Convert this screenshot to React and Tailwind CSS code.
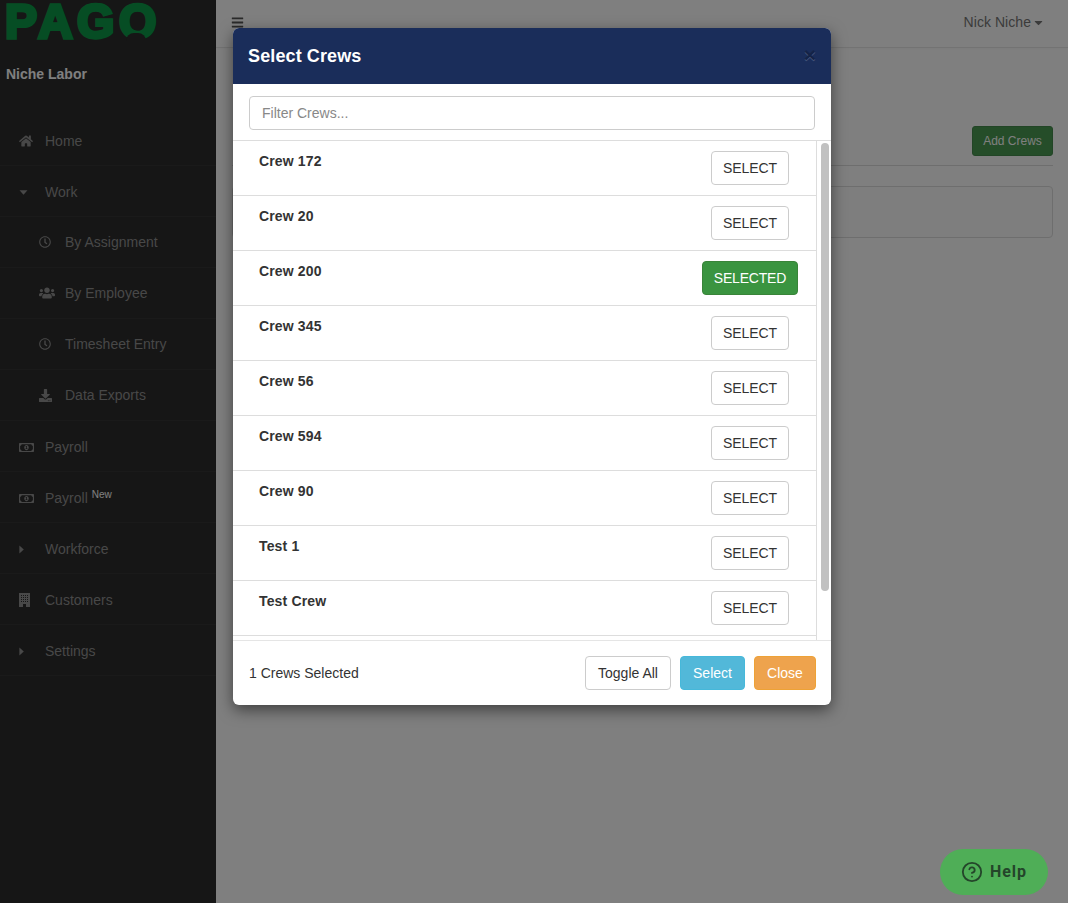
import React from "react";
import { FaHome, FaRegClock, FaUsers, FaDownload, FaRegMoneyBillAlt, FaBars, FaCaretDown } from "react-icons/fa";
import { CircleHelp } from "lucide-react";

const crews = ["Crew 172", "Crew 20", "Crew 200", "Crew 345", "Crew 56", "Crew 594", "Crew 90", "Test 1", "Test Crew"];

const CaretDown = () => (
  <svg width="9" height="5" viewBox="0 0 9 5" className="fill-[#909090]">
    <path d="M0.5 0.2h8L4.5 4.8z" />
  </svg>
);

const CaretRight = () => (
  <svg width="5" height="9" viewBox="0 0 5 9" className="fill-[#909090]">
    <path d="M0.4 0.5v8L4.8 4.5z" />
  </svg>
);

const Building = () => (
  <svg width="11" height="14" viewBox="0 0 11 14" className="fill-[#909090]">
    <path
      fillRule="evenodd"
      d="M0 0h11v14H0zM2 2v1h1V2zM4 2v1h1V2zM6 2v1h1V2zM8 2v1h1V2zM2 4v1h1V4zM4 4v1h1V4zM6 4v1h1V4zM8 4v1h1V4zM2 6v1h1V6zM4 6v1h1V6zM6 6v1h1V6zM8 6v1h1V6zM2 8v1h1V8zM4 8v1h1V8zM6 8v1h1V8zM8 8v1h1V8zM4 11v3h3v-3z"
    />
  </svg>
);

const menu = [
  { label: "Home", icon: <FaHome className="text-[14px] text-[#909090]" /> },
  { label: "Work", icon: <CaretDown /> },
  { label: "By Assignment", icon: <FaRegClock className="text-[12px] text-[#909090]" />, sub: true },
  { label: "By Employee", icon: <FaUsers className="text-[16px] text-[#909090]" />, sub: true },
  { label: "Timesheet Entry", icon: <FaRegClock className="text-[12px] text-[#909090]" />, sub: true },
  { label: "Data Exports", icon: <FaDownload className="text-[13px] text-[#909090]" />, sub: true },
  { label: "Payroll", icon: <FaRegMoneyBillAlt className="text-[15px] text-[#909090]" /> },
  { label: "Payroll", icon: <FaRegMoneyBillAlt className="text-[15px] text-[#909090]" />, badge: "New" },
  { label: "Workforce", icon: <CaretRight /> },
  { label: "Customers", icon: <Building /> },
  { label: "Settings", icon: <CaretRight /> },
];

const MenuItem = ({ item }) => (
  <div className={`flex h-[51px] items-center border-b border-[#343434] text-[14px] text-[#909090] ${item.sub ? "pl-[39px]" : "pl-[19px] pt-[2px]"}`}>
    <span className="flex w-[26px] shrink-0 items-center">{item.icon}</span>
    <span>{item.label}</span>
    {item.badge && <sup className="relative top-[-3px] ml-1 text-[10px] text-white">{item.badge}</sup>}
  </div>
);

const Sidebar = () => (
  <aside className="h-full w-[216px] shrink-0 bg-[#2c2c2c]">
    <div className="relative h-[48px]">
      <span className="absolute top-0 left-[5px] text-[48px] leading-[44px] font-bold tracking-[4.5px] text-[#0c9a48] [-webkit-text-stroke:3.5px_#0c9a48]">
        PAGO
      </span>
      <span className="absolute top-[33px] left-[126px] h-[10px] w-[20px] rounded-t-[8px] bg-[#2c2c2c]" />
    </div>
    <div className="h-[67px] pt-[17px] pl-[6px] text-[14px] leading-[18px] font-bold text-white">Niche Labor</div>
    {menu.map((item, i) => (
      <MenuItem key={i} item={item} />
    ))}
  </aside>
);

const CrewRow = ({ name }) => {
  const selected = name === "Crew 200";
  return (
    <div className="flex h-[55px] justify-between border-b border-[#dddddd] pt-[10px] pl-[26px]">
      <span className="pt-[1px] text-[14px] leading-[18px] font-bold tracking-[0.15px] text-[#333333]">{name}</span>
      <div className="mr-[18px] flex w-[96px] justify-center">
        {selected ? (
          <button className="h-[34px] w-[96px] rounded-[4px] border border-[#398439] bg-[#3a9440] text-[14px] tracking-[-0.2px] text-white">SELECTED</button>
        ) : (
          <button className="h-[34px] w-[78px] rounded-[4px] border border-[#cccccc] bg-white text-[14px] tracking-[-0.1px] text-[#333333]">SELECT</button>
        )}
      </div>
    </div>
  );
};

const CrewModal = () => (
  <div className="absolute top-[28px] left-[233px] w-[598px] overflow-hidden rounded-[6px] bg-white shadow-[0_5px_15px_rgba(0,0,0,0.5)]">
    <div className="flex h-[56px] items-center justify-between bg-[#1a2d5a] pr-[15px] pl-[15px] text-white">
      <h4 className="text-[18px] font-bold tracking-[0.12px]">Select Crews</h4>
      <span className="-mt-[3px] text-[21px] leading-none font-bold text-black opacity-20 [text-shadow:0_1px_0_#fff]">×</span>
    </div>
    <div className="h-[57px] border-b border-[#dddddd] px-[16px] pt-[12px]">
      <input
        placeholder="Filter Crews..."
        className="h-[34px] w-full rounded-[4px] border border-[#cccccc] px-[12px] text-[14px] text-[#555555] placeholder:text-[#888888]"
      />
    </div>
    <div className="relative h-[499px] overflow-hidden">
      <div className="h-full w-[584px] border-r border-[#dddddd]">
        {crews.map((c) => (
          <CrewRow key={c} name={c} />
        ))}
      </div>
      <div className="absolute top-[2px] right-[2px] h-[448px] w-[8px] rounded-full bg-[#c1c1c1]" />
    </div>
    <div className="flex h-[65px] items-center justify-between border-t border-[#e5e5e5] pr-[15px] pl-[16px] text-[14px]">
      <span className="text-[#333333]">1 Crews Selected</span>
      <div className="flex gap-[9px]">
        <button className="h-[34px] w-[86px] rounded-[4px] border border-[#cccccc] bg-white text-[#333333]">Toggle All</button>
        <button className="h-[34px] w-[65px] rounded-[4px] border border-[#46b8da] bg-[#52b8d9] text-white">Select</button>
        <button className="h-[34px] w-[62px] rounded-[4px] border border-[#eea236] bg-[#eea34d] text-white">Close</button>
      </div>
    </div>
  </div>
);

const App = () => (
  <div className="relative flex h-[903px] w-[1073px] overflow-hidden bg-white font-['Liberation_Sans',Arial,sans-serif]">
    <Sidebar />
    <main className="w-[852px] shrink-0">
      <div className="flex h-[48px] items-center justify-between border-b border-[#e7e7e7] bg-white pr-[23px] pb-[2px] pl-[15px] shadow-[0_1px_2px_rgba(0,0,0,0.03)]">
        <FaBars className="text-[13px] text-[#555555]" />
        <span className="flex items-center gap-[1px] text-[14px] tracking-[0.05px] text-[#777777]">
          Nick Niche <FaCaretDown className="text-[13px]" />
        </span>
      </div>
      <div className="pr-[15px] pl-[16px]">
        <div className="flex h-[118px] items-end justify-end border-b border-[#dddddd] pb-[9px]">
          <button className="h-[30px] w-[81px] rounded-[3px] border border-[#458a4c] bg-[#4a9a52] text-[12px] text-white">Add Crews</button>
        </div>
        <div className="mt-[20px] h-[52px] rounded-[4px] border border-[#dddddd] bg-[#fdfdfd]" />
      </div>
    </main>
    <div className="absolute top-0 left-0 h-full w-[1068px] bg-[rgba(0,0,0,0.5)]" />
    <CrewModal />
    <button className="absolute top-[849px] left-[940px] flex h-[46px] w-[108px] items-center justify-center gap-[7px] rounded-full bg-[#4fae57] font-['Roboto',sans-serif] text-[16px] font-bold tracking-[1px] text-[#24452a]">
      <CircleHelp size={22} strokeWidth={2} />
      Help
    </button>
  </div>
);

export default App;
